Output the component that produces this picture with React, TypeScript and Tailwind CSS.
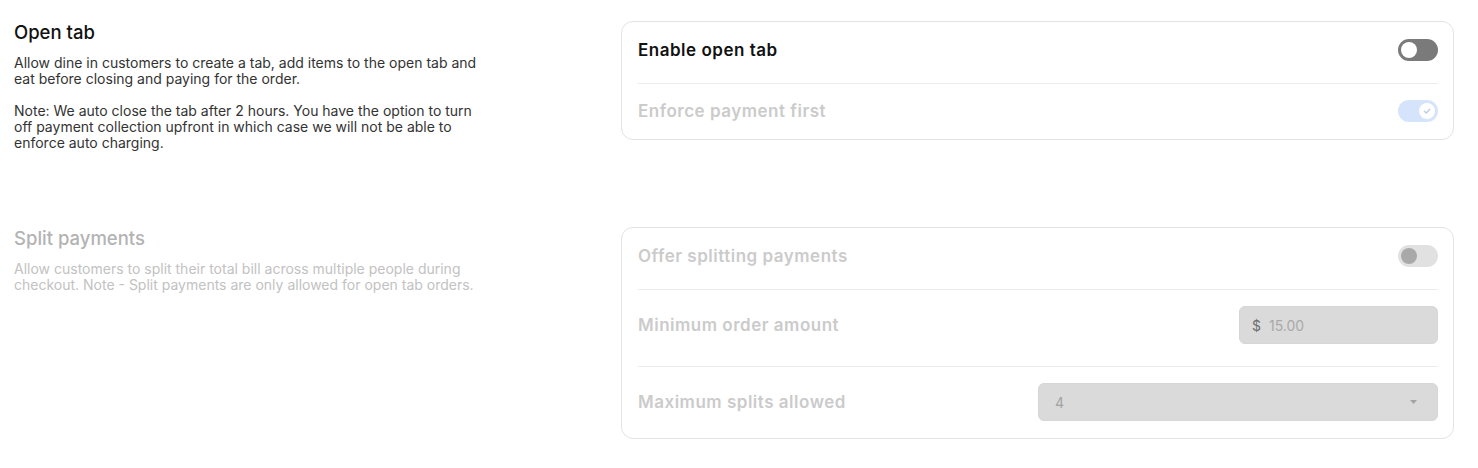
import React from "react";

function Toggle({ variant }: { variant: "off" | "checkedDisabled" | "offDisabled" }) {
  if (variant === "off") {
    return (
      <div className="w-10 h-[22px] rounded-full bg-[#7a7a7a] flex items-center px-[3px] shrink-0">
        <div className="w-4 h-4 rounded-full bg-white" />
      </div>
    );
  }
  if (variant === "checkedDisabled") {
    return (
      <div className="w-10 h-[22px] rounded-full bg-[#d6e4fb] flex items-center justify-end px-[3px] shrink-0">
        <div className="w-4 h-4 rounded-full bg-white flex items-center justify-center">
          <svg width="10" height="10" viewBox="0 0 10 10" fill="none">
            <path d="M2.3 5.2 L4.2 7 L7.8 3.2" stroke="#b8c9e8" strokeWidth="1.3" strokeLinecap="round" strokeLinejoin="round" />
          </svg>
        </div>
      </div>
    );
  }
  return (
    <div className="w-10 h-[22px] rounded-full bg-[#e1e1e1] flex items-center px-[3px] shrink-0">
      <div className="w-4 h-4 rounded-full bg-[#a9a9a9]" />
    </div>
  );
}

function Row({
  label,
  disabled,
  first,
  last,
  children,
}: {
  label: string;
  disabled?: boolean;
  first?: boolean;
  last?: boolean;
  children: React.ReactNode;
}) {
  return (
    <div
      className={
        "flex items-center justify-between " +
        (first ? "" : "pt-4 ") +
        (last ? "" : "pb-[22px] border-b border-[#ececec]")
      }
    >
      <span
        className={
          "text-[17px] tracking-[0.03em] font-semibold leading-[22px] " +
          (disabled ? "text-[#cbcbcb]" : "text-[#111111]")
        }
      >
        {label}
      </span>
      {children}
    </div>
  );
}

export default function App() {
  return (
    <div className="[font-family:Inter,'Noto_Sans',sans-serif] bg-white w-[1478px] min-h-[468px] pl-[14px] pr-6 pt-[21px] flex flex-col gap-[76px]">
      {/* Open tab */}
      <div className="flex items-start">
        <div className="w-[607px] shrink-0">
          <div className="w-[472px]">
            <h2 className="text-[18.5px] leading-[22px] font-medium text-[#111111]">Open tab</h2>
            <p className="mt-3 text-[14px] leading-4 text-[#333333]">
              Allow dine in customers to create a tab, add items to the open tab and eat before closing and paying for the order.
            </p>
            <p className="mt-4 text-[14px] leading-4 text-[#333333]">
              Note: We auto close the tab after 2 hours. You have the option to turn off payment collection upfront in which case we will not be able to enforce auto charging.
            </p>
          </div>
        </div>
        <div className="flex-1 border border-[#e3e3e3] rounded-xl pl-4 pr-[15px] py-[17px]">
          <Row label="Enable open tab" first>
            <Toggle variant="off" />
          </Row>
          <Row label="Enforce payment first" disabled last>
            <Toggle variant="checkedDisabled" />
          </Row>
        </div>
      </div>

      {/* Split payments */}
      <div className="flex items-start">
        <div className="w-[607px] shrink-0">
          <div className="w-[472px]">
            <h2 className="text-[18.5px] leading-[22px] font-medium text-[#b3b3b3]">Split payments</h2>
            <p className="mt-3 text-[14px] leading-4 text-[#c2c2c2]">
              Allow customers to split their total bill across multiple people during checkout. Note - Split payments are only allowed for open tab orders.
            </p>
          </div>
        </div>
        <div className="flex-1 border border-[#e3e3e3] rounded-xl pl-4 pr-[15px] py-[17px]">
          <Row label="Offer splitting payments" disabled first>
            <Toggle variant="offDisabled" />
          </Row>
          <Row label="Minimum order amount" disabled>
            <div className="w-[199px] h-[38px] rounded-md bg-[#dadada] border border-[#d6d6d6] flex items-center px-3 text-[14px] shrink-0">
              <span className="text-[#6e6e6e]">$</span>
              <span className="ml-2 text-[#a9a9a9]">15.00</span>
            </div>
          </Row>
          <Row label="Maximum splits allowed" disabled last>
            <div className="w-[400px] h-[38px] rounded-md bg-[#dadada] border border-[#d6d6d6] flex items-center justify-between pl-4 pr-5 text-[14px] shrink-0">
              <span className="text-[#a3a3a3]">4</span>
              <svg width="7" height="4" viewBox="0 0 7 4">
                <path d="M0 0 L7 0 L3.5 4 Z" fill="#a3a3a3" />
              </svg>
            </div>
          </Row>
        </div>
      </div>
    </div>
  );
}
